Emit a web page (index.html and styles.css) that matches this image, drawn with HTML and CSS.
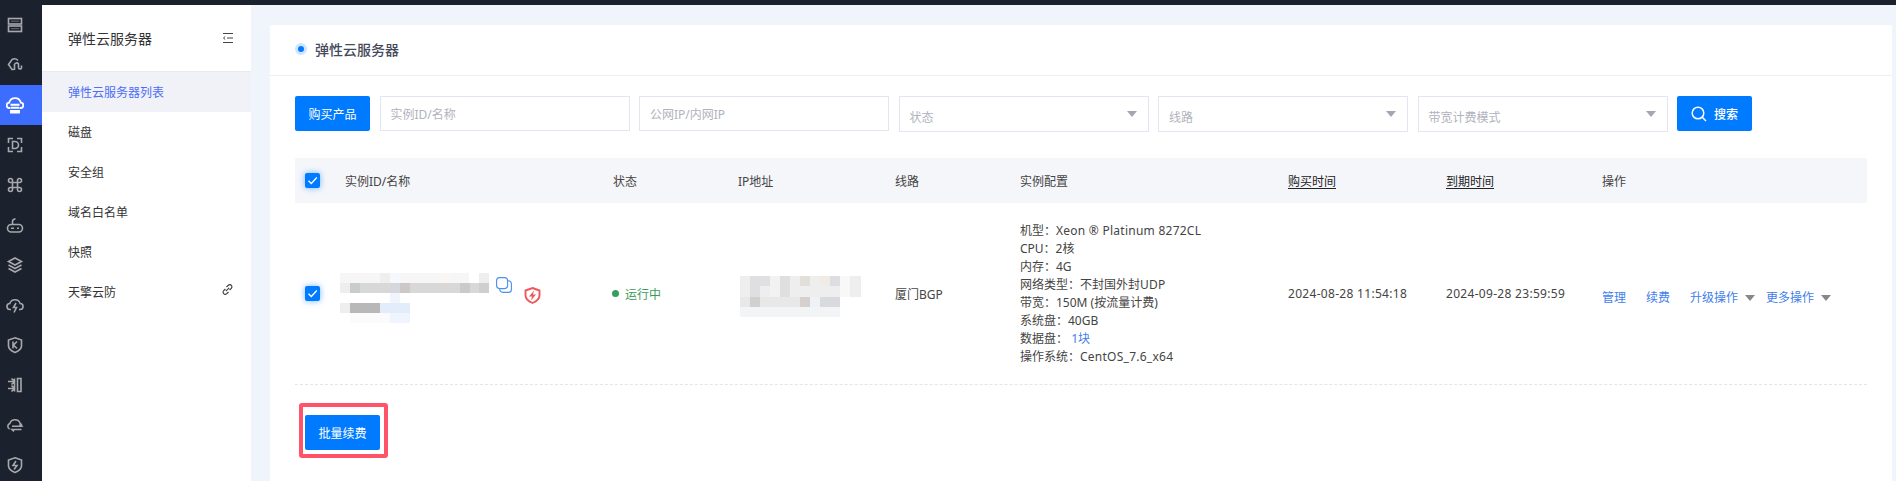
FILE: index.html
```html
<!DOCTYPE html>
<html lang="zh-CN">
<head>
<meta charset="utf-8">
<title>弹性云服务器</title>
<link rel="stylesheet" href="styles.css">
</head>
<body>
<div class="topbar"></div>
<div class="layout">
  <nav class="rail">
    <a class="rail-item"><svg class="ri" viewBox="0 0 18 18"><rect x="2.500" y="2.500" width="13" height="5.500"/><rect x="2.500" y="10" width="13" height="5.500"/><path class="fine" d="M5 5.200h8M5 12.700h8"/></svg></a>
    <a class="rail-item"><svg class="ri" viewBox="0 0 18 18"><path d="M12 4.500A5 5 0 0 0 6 3.500L2.500 8.500 6 13.500h2M8.500 14V8.500a2.200 2.200 0 0 1 4-.5v3.500a1.500 1.500 0 0 0 3 0V9.500"/></svg></a>
    <a class="rail-item active"><svg class="ri thick" viewBox="0 0 18 18"><g transform="translate(0 1)"><path d="M4.500 11H3.500a2.700 2.700 0 0 1-.3-5.400 6 6 0 0 1 11.600 0 2.700 2.700 0 0 1-.3 5.400h-1"/><path d="M4.500 7.800h9M5 10.800h8M5 14h8v1.500H5z"/></g></svg></a>
    <a class="rail-item"><svg class="ri" viewBox="0 0 18 18"><path d="M7 2.500H2.500V7M11 2.500h4.500V7M2.500 11v4.500H7M15.500 11v4.500H11M6.500 5.500h2.500a3.500 3.500 0 0 1 0 7H6.500z"/></svg></a>
    <a class="rail-item"><svg class="ri" viewBox="0 0 18 18"><path d="M6.500 6.500h5v5h-5zM6.500 6.500v-2a2 2 0 1 0-2 2zM11.500 6.500v-2a2 2 0 1 1 2 2zM6.500 11.500v2a2 2 0 1 1-2-2zM11.500 11.500v2a2 2 0 1 0 2-2z"/></svg></a>
    <a class="rail-item"><svg class="ri" viewBox="0 0 18 18"><rect x="1.500" y="8.500" width="15" height="7.500" rx="3.700"/><path d="M5 12.200h3M11 12.200h2M6.500 8.500V5.500c0-1.500 1-2.300 3-2.800"/></svg></a>
    <a class="rail-item"><svg class="ri" viewBox="0 0 18 18"><path d="M9 2 15.500 5.500 9 9 2.500 5.500zM2.500 9 9 12.500 15.500 9M2.500 12.500 9 16l6.500-3.500"/></svg></a>
    <a class="rail-item"><svg class="ri" viewBox="0 0 18 18"><path d="M5 13.500H4.200a3 3 0 0 1-.4-6 5.500 5.500 0 0 1 10.400 0 3 3 0 0 1-.4 6H13"/><path d="M10 7 7.500 11.500h3L8 16.500"/></svg></a>
    <a class="rail-item"><svg class="ri" viewBox="0 0 18 18"><path d="M9 1.800 15.500 4v6c0 3-3 5-6.500 6.500C5.500 15 2.500 13 2.500 10V4z"/><path d="M7 5.500v7M11 5.500 7.500 9l3.500 3.500"/></svg></a>
    <a class="rail-item"><svg class="ri" viewBox="0 0 18 18"><path d="M2 5.500h6M5.500 2.500l3 3-3 3M2 12.500h6M5.500 9.500l3 3-3 3M8.500 2.500v13M11.500 2.500h3.500v13h-3.500z"/></svg></a>
    <a class="rail-item"><svg class="ri" viewBox="0 0 18 18"><path d="M3.500 13a3 3 0 0 1 .3-5.500 5.500 5.500 0 0 1 10.400 0A3 3 0 0 1 15.800 10"/><path d="M6 10.300h9.500l-2-1.800M15.500 13.500H6l2 1.800"/></svg></a>
    <a class="rail-item"><svg class="ri" viewBox="0 0 18 18"><path d="M9 1.800 15.500 4v6c0 3-3 5-6.500 6.500C5.500 15 2.500 13 2.500 10V4z"/><path d="M10 5 7 9.500h4L8 13.500"/></svg></a>
  </nav>

  <aside class="panel">
    <header class="panel-head">
      <span class="panel-title">弹性云服务器</span>
      <svg class="tiny-icon" viewBox="0 0 10 10"><path d="M0 .5h10M4 5h6M0 9.500h10M2.200 3.500.5 5l1.700 1.500"/></svg>
    </header>
    <ul class="menu">
      <li class="menu-item active">弹性云服务器列表</li>
      <li class="menu-item">磁盘</li>
      <li class="menu-item">安全组</li>
      <li class="menu-item">域名白名单</li>
      <li class="menu-item">快照</li>
      <li class="menu-item">天擎云防
        <svg class="tiny-icon link-icon" viewBox="0 0 11 11"><path d="M4.500 3 6.300 1.300a2 2 0 0 1 3 3L7.600 6M6.500 8 4.700 9.700a2 2 0 0 1-3-3L3.400 5M3.800 7.200l3.400-3.400"/></svg>
      </li>
    </ul>
  </aside>

  <main class="content">
    <section class="card">
      <header class="card-head">
        <span class="dot"></span>
        <h1 class="card-title">弹性云服务器</h1>
      </header>
      <div class="card-body">
        <div class="toolbar">
          <button class="btn">购买产品</button>
          <div class="field">实例ID/名称</div>
          <div class="field">公网IP/内网IP</div>
          <div class="field select">状态<i class="caret"></i></div>
          <div class="field select">线路<i class="caret"></i></div>
          <div class="field select">带宽计费模式<i class="caret"></i></div>
          <button class="btn btn-search">
            <svg class="search-icon" viewBox="0 0 16 16"><circle cx="7" cy="7" r="5.800"/><path d="M11.300 11.300 15 15"/></svg>
            搜索
          </button>
        </div>

        <div class="row row-head">
          <div class="cell-check"><span class="check"><svg viewBox="0 0 15 15"><path d="M3.500 7.800 6.300 10.500 11.800 4.500"/></svg></span></div>
          <div>实例ID/名称</div>
          <div>状态</div>
          <div>IP地址</div>
          <div>线路</div>
          <div>实例配置</div>
          <div class="sortable">购买时间</div>
          <div class="sortable">到期时间</div>
          <div>操作</div>
        </div>

        <div class="row row-body">
          <div class="cell-check"><span class="check"><svg viewBox="0 0 15 15"><path d="M3.500 7.800 6.300 10.500 11.800 4.500"/></svg></span></div>
          <div class="name-cell">
            <svg class="mosaic" width="149" height="50" viewBox="0 0 149 50">
              <rect width="129" height="10" fill="#f6f6f6"/><rect x="40" width="10" height="10" fill="#efefef"/><rect x="50" width="10" height="10" fill="#f5f8fc"/><rect x="100" width="10" height="10" fill="#f9f6f4"/><rect x="139" width="10" height="10" fill="#eeeeee"/>
              <rect y="10" width="149" height="10" fill="#d8d8d8"/><rect y="10" width="10" height="10" fill="#eeeeee"/><rect x="10" y="10" width="10" height="10" fill="#c9cccc"/><rect x="50" y="10" width="10" height="10" fill="#d5d7dd"/><rect x="60" y="10" width="10" height="10" fill="#ccc8c8"/><rect x="120" y="10" width="10" height="10" fill="#cdc9ca"/><rect x="139" y="10" width="10" height="10" fill="#cfcfcf"/>
              <rect y="30" width="10" height="10" fill="#eeeeee"/><rect x="10" y="30" width="30" height="10" fill="#b8b8b8"/><rect x="40" y="30" width="30" height="10" fill="#e2ecfa"/>
              <rect x="10" y="40" width="40" height="10" fill="#fbfbfb"/><rect x="50" y="40" width="20" height="10" fill="#eff4fd"/><rect x="50" y="20" width="10" height="10" fill="#f0f5fd"/>
            </svg>
            <svg class="copy-icon" viewBox="0 0 16 16"><rect x=".6" y=".6" width="11" height="11" rx="3"/><path d="M12 3.800a3 3 0 0 1 3.400 3v5.600a3 3 0 0 1-3 3H6.800a3 3 0 0 1-3-3.300"/></svg>
            <svg class="shield-icon" viewBox="0 0 17 17"><path d="M8.500 1 15.500 3.500V8.500c0 3.500-3 5.800-7 7.500-4-1.700-7-4-7-7.500V3.500z"/><path class="bolt" d="M10 3.500 5 9.500h3L7 13.500 12 7.500H9z"/></svg>
          </div>
          <div class="status"><i class="status-dot"></i>运行中</div>
          <div class="ip-cell">
            <svg class="mosaic" width="121" height="41" viewBox="0 0 121 41">
              <rect width="121" height="21" fill="#eeeeee"/><rect x="10" width="10" height="21" fill="#dfdfe1"/><rect x="20" width="10" height="10" fill="#e0e0e2"/><rect x="30" width="10" height="21" fill="#f2f2f2"/><rect x="40" width="10" height="21" fill="#e0dfdd"/><rect x="60" width="10" height="10" fill="#e2dfda"/><rect x="80" width="10" height="10" fill="#f0ebe4"/><rect x="90" width="10" height="10" fill="#dcdee2"/><rect x="100" width="10" height="21" fill="#f8f8f8"/>
              <rect y="21" width="100" height="10" fill="#e8e8e8"/><rect x="10" y="21" width="10" height="10" fill="#cfd1cf"/><rect x="60" y="21" width="10" height="10" fill="#d5d0cd"/><rect x="70" y="21" width="10" height="10" fill="#eef2f6"/><rect x="80" y="21" width="20" height="10" fill="#d9dade"/>
              <rect y="31" width="100" height="10" fill="#f3f4f5"/>
            </svg>
          </div>
          <div>厦门BGP</div>
          <div class="spec">
            <p>机型：<span class="latin">Xeon ® Platinum 8272CL</span></p>
            <p>CPU：2核</p>
            <p>内存：4G</p>
            <p>网络类型：不封国外封<span class="latin">UDP</span></p>
            <p>带宽：150M (按流量计费)</p>
            <p>系统盘：40GB</p>
            <p>数据盘： <a class="link">1块</a></p>
            <p>操作系统：<span class="latin">CentOS_7.6_x64</span></p>
          </div>
          <div class="date">2024-08-28 11:54:18</div>
          <div class="date">2024-09-28 23:59:59</div>
          <div class="ops">
            <a class="link">管理</a>
            <a class="link">续费</a>
            <a class="link drop">升级操作<i class="caret dark"></i></a>
            <a class="link drop">更多操作<i class="caret dark"></i></a>
          </div>
        </div>

        <div class="batch">
          <button class="btn btn-batch">批量续费</button>
          <span class="callout"></span>
        </div>
      </div>
    </section>
  </main>
</div>
</body>
</html>
```

FILE: styles.css
```css
* { box-sizing: border-box; }
html, body { margin: 0; height: 100%; overflow: hidden; }
body {
  display: flex;
  flex-direction: column;
  font-family: "Noto Sans", "Noto Sans CJK SC", sans-serif;
  font-size: 12px;
  color: #444;
  background: #f0f4fb;
}
.topbar { height: 5px; flex: none; background: #1c212e; }
.layout { flex: 1; display: flex; min-height: 0; }

.rail { width: 42px; flex: none; background: #1c212e; overflow: hidden; }
.rail-item { display: flex; align-items: center; height: 40px; padding-left: 6px; color: #a6a8ab; }
.rail-item.active { background: #3d6dff; color: #fff; }
.ri { width: 18px; height: 18px; fill: none; stroke: currentColor; stroke-width: 1.6; }
.ri.thick { stroke-width: 1.9; }
.ri .fine { stroke-width: 1; opacity: .55; }

.panel { width: 209px; flex: none; background: #fff; }
.panel-head {
  height: 67px;
  display: flex;
  align-items: center;
  justify-content: space-between;
  padding: 0 18px 0 26px;
  border-bottom: 1px solid #e8eaf0;
}
.panel-title { font-size: 14px; color: #333; }
.tiny-icon { width: 10px; height: 10px; fill: none; stroke: #444; stroke-width: 1; }
.menu { list-style: none; margin: 0; padding: 0; }
.menu-item {
  height: 40px;
  display: flex;
  align-items: center;
  justify-content: space-between;
  padding: 0 18px 0 26px;
  color: #333;
}
.menu-item.active { background: #f1f2f7; color: #4d6ef5; }
.link-icon { width: 11px; height: 11px; stroke-width: 1.2; margin-top: -6px; }

.content { flex: 1; min-width: 0; padding: 20px 4px 0 19px; }
.card { height: 100%; background: #fff; border-radius: 2px 2px 0 0; }
.card-head {
  height: 51px;
  display: flex;
  align-items: center;
  gap: 8px;
  padding: 0 0 2px 25px;
  border-bottom: 1px solid #edeff5;
}
.dot {
  width: 12px;
  height: 12px;
  border-radius: 50%;
  background: #007bff;
  border: 3px solid #cfe4ff;
}
.card-title { margin: 0; font-size: 14px; font-weight: 500; color: #444a5a; }
.card-body { padding: 20px 25px 0; }

.toolbar { display: flex; gap: 9.5px; align-items: flex-start; }
.btn {
  height: 35px;
  width: 75px;
  flex: none;
  border: 0;
  border-radius: 2px;
  background: #007bff;
  color: #fff;
  font: inherit;
  padding: 0;
}
.btn-search { display: flex; align-items: center; justify-content: center; gap: 7px; font-weight: 500; }
.search-icon { width: 16px; height: 16px; fill: none; stroke: #fff; stroke-width: 1.5; }
.field {
  width: 250px;
  height: 35px;
  flex: none;
  display: flex;
  align-items: center;
  padding-left: 10px;
  border: 1px solid #e3e6f0;
  color: #b0b3bd;
}
.select { height: 36px; justify-content: space-between; padding: 6px 11px 0 10px; }
.caret {
  width: 0;
  height: 0;
  border-left: 5px solid transparent;
  border-right: 5px solid transparent;
  border-top: 6px solid #a4a7b2;
  margin-top: -6px;
}
.caret.dark { border-top-color: #888; margin: 2px 0 0 7px; }

.row {
  display: grid;
  grid-template-columns: 50px 268px 125px 157px 125px 268px 158px 156px 265px;
  align-items: center;
}
.row-head { height: 45px; margin-top: 26px; background: #f5f6fa; }
.row-body { height: 182px; border-bottom: 1px dashed #e3e5ec; }
.cell-check { padding-left: 10px; display: flex; }
.check {
  width: 15px;
  height: 15px;
  display: block;
  border-radius: 2px;
  background: #007bff;
  box-shadow: 0 0 6px rgba(0, 123, 255, .55);
}
.check svg { display: block; fill: none; stroke: #fff; stroke-width: 1.3; }
.sortable { color: #222; text-decoration: underline; text-underline-offset: 2px; }

.name-cell { display: flex; align-items: flex-start; margin: 9px 0 0 -5px; }
.mosaic { display: block; shape-rendering: crispEdges; }
.copy-icon { width: 16px; height: 16px; margin: 4px 0 0 7px; fill: none; stroke: #4a8ff0; stroke-width: 1.1; }
.shield-icon { width: 17px; height: 17px; margin: 14px 0 0 12px; fill: none; stroke: #f0575a; stroke-width: 1.9; }
.bolt { fill: #f0575a; stroke: none; }

.status { display: flex; align-items: center; gap: 6px; color: #3a9c58; margin-left: -1px; }
.status-dot { width: 7px; height: 7px; border-radius: 50%; background: #34a05a; }
.ip-cell { margin: 6px 0 0 2px; }
.spec p { margin: 0; line-height: 18px; }
.latin { letter-spacing: .25px; }
.link { color: #3f80ea; }
.date { color: #444; letter-spacing: .3px; }
.ops { display: flex; align-items: center; margin-top: 6px; gap: 20px; }
.drop { display: flex; align-items: center; }
.drop + .drop { margin-left: -9px; }

.batch { position: relative; margin: 30px 0 0 10px; }
.callout {
  position: absolute;
  left: -6px;
  top: -12px;
  width: 89px;
  height: 55px;
  border: 4px solid #ff5468;
  border-radius: 3px;
  pointer-events: none;
}
```
